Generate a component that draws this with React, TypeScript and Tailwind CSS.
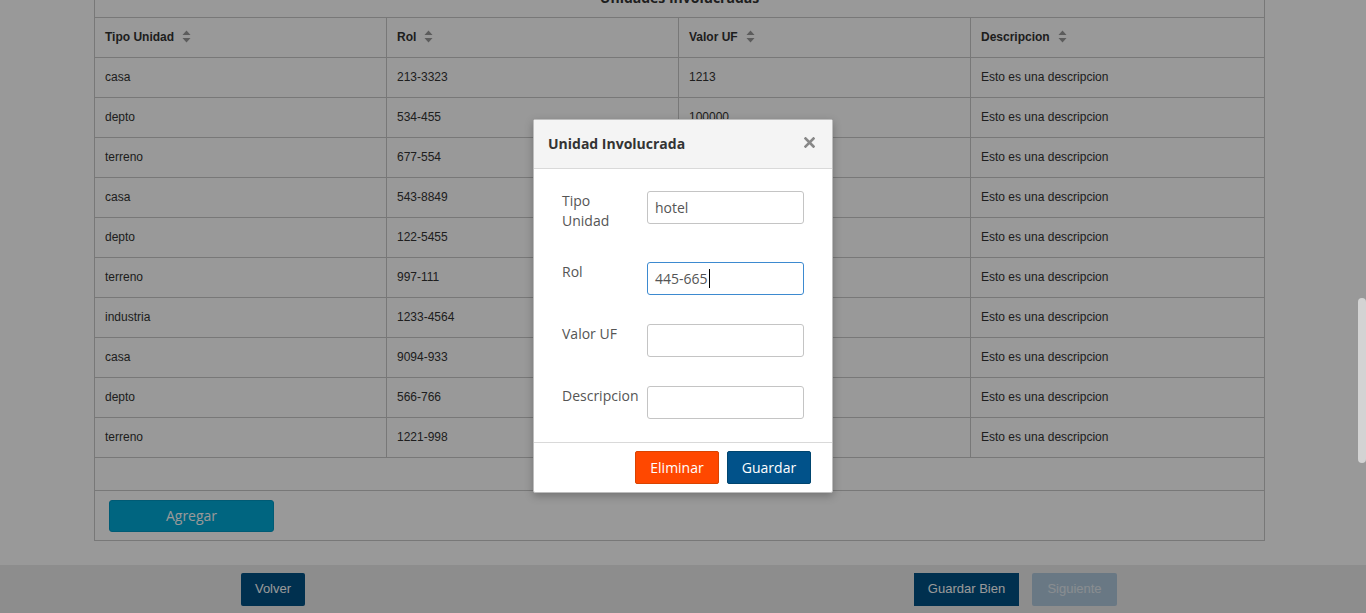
import { ReactNode } from "react";

const rows = [
  ["casa", "213-3323", "1213"],
  ["depto", "534-455", "100000"],
  ["terreno", "677-554", "4545"],
  ["casa", "543-8849", "3434"],
  ["depto", "122-5455", "7676"],
  ["terreno", "997-111", "8787"],
  ["industria", "1233-4564", "9898"],
  ["casa", "9094-933", "1212"],
  ["depto", "566-766", "5656"],
  ["terreno", "1221-998", "3232"],
];

function SortIcon() {
  return (
    <svg width="9" height="13" viewBox="0 0 9 13" className="ml-2 inline-block align-[-2px]">
      <path d="M4.5 0.5 L8.5 5 H0.5 Z" fill="#9a9a9a" />
      <path d="M4.5 12.5 L8.5 8 H0.5 Z" fill="#9a9a9a" />
    </svg>
  );
}

function Field({ label, value, focused, caret }: { label: ReactNode; value?: string; focused?: boolean; caret?: boolean }) {
  return (
    <div className="flex items-start">
      <div className="w-[85px] pb-[2px] text-[14px] leading-[20px] text-[#555]">{label}</div>
      <div
        className={`flex h-[33px] w-[157px] items-center rounded-[3px] border px-[7px] text-[14px] text-[#555] ${
          focused ? "border-[#3d8ad0]" : "border-[#c4c4c4]"
        }`}
      >
        {value}
        {caret ? <span className="ml-px inline-block h-[19px] w-px bg-black" /> : null}
      </div>
    </div>
  );
}

export default function App() {
  const cell = "border border-[#c8c8c8] px-[10px] pb-[2px] text-[12px]";
  return (
    <div className="relative h-[613px] w-[1366px] overflow-hidden bg-white font-['Liberation_Sans',sans-serif] text-[#333]">
      <div className="flex h-full">
        <main className="flex-1">
          <div className="mx-auto -mt-[23px] w-[1170px]">
            <table className="w-full table-fixed border-collapse border border-[#c8c8c8]">
              <colgroup>
                <col className="w-[292px]" />
                <col className="w-[292px]" />
                <col className="w-[292px]" />
                <col className="w-[294px]" />
              </colgroup>
              <thead>
                <tr className="h-[40px]">
                  <th colSpan={4} className="border border-[#c8c8c8] text-center font-['Open_Sans',sans-serif] text-[14px] font-bold">
                    Unidades Involucradas
                  </th>
                </tr>
                <tr className="h-[40px]">
                  {["Tipo Unidad", "Rol", "Valor UF", "Descripcion"].map((h) => (
                    <th key={h} className={`${cell} text-left font-bold`}>
                      {h}
                      <SortIcon />
                    </th>
                  ))}
                </tr>
              </thead>
              <tbody>
                {rows.map((r, i) => (
                  <tr key={i} className="h-[40px]">
                    <td className={cell}>{r[0]}</td>
                    <td className={cell}>{r[1]}</td>
                    <td className={cell}>{r[2]}</td>
                    <td className={cell}>Esto es una descripcion</td>
                  </tr>
                ))}
                <tr className="h-[33px]">
                  <td colSpan={4} className="border border-[#c8c8c8]" />
                </tr>
                <tr className="h-[50px]">
                  <td colSpan={4} className="border border-[#c8c8c8] px-[14px]">
                    <button className="h-[32px] w-[165px] rounded-[3px] border border-[#0098c4] bg-[#00a8d6] font-['Open_Sans',sans-serif] text-[14px] text-white">
                      Agregar
                    </button>
                  </td>
                </tr>
              </tbody>
            </table>
          </div>
        </main>
        <div className="w-[8px]" />
      </div>

      <footer className="absolute bottom-0 left-0 right-0 h-[48px] bg-[#ebebeb]">
        <div className="flex h-full items-center">
          <button className="ml-[241px] h-[33px] w-[64px] rounded-[2px] bg-[#005084] text-[13px] text-white">Volver</button>
          <button className="ml-[609px] h-[33px] w-[105px] bg-[#005084] text-[13px] text-white">Guardar Bien</button>
          <button className="ml-[13px] h-[33px] w-[85px] rounded-[2px] bg-[#b0c9dd] text-[13px] text-[#e4ebf1]">Siguiente</button>
        </div>
      </footer>

      <div className="absolute inset-0 bg-black/40" />
      <div className="absolute right-0 top-[298px] h-[165px] w-[8px] rounded-[4px] bg-[#d3d3d3]" />

      <div className="absolute inset-0 flex justify-center pt-[119px] font-['Open_Sans',sans-serif]">
        <div className="h-fit w-[300px] rounded-[2px] border border-[#bdbdbd] bg-white shadow-[0_3px_9px_rgba(0,0,0,0.25)]">
          <div className="flex h-[49px] items-center justify-between border-b border-[#d9d9d9] bg-[#f4f4f4] pb-[2px] pl-[14px] pr-[17px]">
            <span className="text-[14px] font-bold text-[#333]">Unidad Involucrada</span>
            <svg width="11" height="11" viewBox="0 0 11 11" className="-mt-[2px]">
              <path d="M1.5 1.5 L9.5 9.5 M9.5 1.5 L1.5 9.5" stroke="#888" strokeWidth="2.6" strokeLinecap="square" />
            </svg>
          </div>
          <div className="flex flex-col gap-[29px] pb-[23px] pl-[28px] pt-[22px]">
            <Field
              label={
                <>
                  Tipo
                  <br />
                  Unidad
                </>
              }
              value="hotel"
            />
            <Field label="Rol" value="445-665" focused caret />
            <Field label="Valor UF" />
            <Field label="Descripcion" />
          </div>
          <div className="flex h-[50px] items-center justify-end gap-[8px] border-t border-[#d9d9d9] pr-[21px]">
            <button className="h-[33px] w-[84px] rounded-[2px] border border-[#d94300] bg-[#ff4800] text-[14px] text-white">Eliminar</button>
            <button className="h-[33px] w-[84px] rounded-[2px] border border-[#00456f] bg-[#01528a] text-[14px] text-white">Guardar</button>
          </div>
        </div>
      </div>
    </div>
  );
}
